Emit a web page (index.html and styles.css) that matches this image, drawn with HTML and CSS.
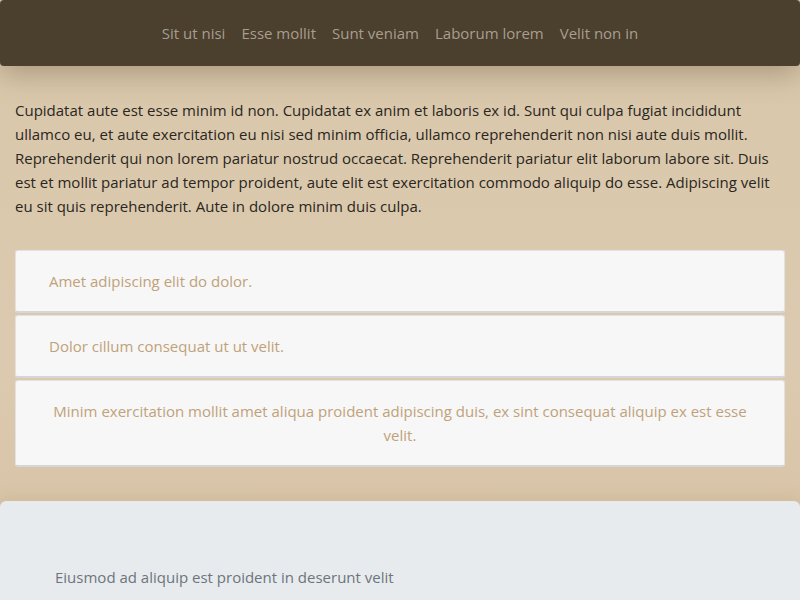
FILE: index.html
```html
<!DOCTYPE html>
<html lang="la">
<head>
<meta charset="utf-8">
<title>Page</title>
<link rel="stylesheet" href="styles.css">
</head>
<body>
<header class="topbar">
  <nav class="nav">
    <a class="nav-link" href="#">Sit ut nisi</a>
    <a class="nav-link" href="#">Esse mollit</a>
    <a class="nav-link" href="#">Sunt veniam</a>
    <a class="nav-link" href="#">Laborum lorem</a>
    <a class="nav-link" href="#">Velit non in</a>
  </nav>
</header>
<main class="main">
  <p class="intro">Cupidatat aute est esse minim id non. Cupidatat ex anim et laboris ex id. Sunt qui culpa fugiat incididunt ullamco eu, et aute exercitation eu nisi sed minim officia, ullamco reprehenderit non nisi aute duis mollit. Reprehenderit qui non lorem pariatur nostrud occaecat. Reprehenderit pariatur elit laborum labore sit. Duis est et mollit pariatur ad tempor proident, aute elit est exercitation commodo aliquip do esse. Adipiscing velit eu sit quis reprehenderit. Aute in dolore minim duis culpa.</p>
  <ul class="cards">
    <li class="card">Amet adipiscing elit do dolor.</li>
    <li class="card">Dolor cillum consequat ut ut velit.</li>
    <li class="card card-center">Minim exercitation mollit amet aliqua proident adipiscing duis, ex sint consequat aliquip ex est esse velit.</li>
  </ul>
</main>
<footer class="footer">
  <p class="footer-text">Eiusmod ad aliquip est proident in deserunt velit</p>
</footer>
</body>
</html>
```
FILE: styles.css
```css
* { box-sizing: border-box; }
html, body { margin: 0; padding: 0; }
body {
  font-family: "Open Sans", "Noto Sans", sans-serif;
  font-size: 15px;
  line-height: 24px;
  color: #2a2620;
  background: linear-gradient(180deg, #d9c7ab 0%, #dccab0 60%, #d8c4a7 85%, #dccab0 100%);
  min-height: 600px;
  overflow: hidden;
}
.topbar {
  height: 66px;
  background: #4b3f2e;
  border-radius: 4px;
  box-shadow: 0 8px 28px rgba(90, 70, 40, 0.35);
  display: flex;
  align-items: center;
  justify-content: center;
  position: relative;
}
.nav { display: flex; gap: 0; }
.nav-link {
  color: #a89e8e;
  text-decoration: none;
  padding: 0 8px;
  font-size: 15px;
}
.main { padding: 32px 15px 0; }
.intro { margin: 0 0 32px; }
.cards { list-style: none; margin: 0; padding: 0; display: flex; flex-direction: column; gap: 2px; }
.card {
  background: #f7f7f7;
  border: 1px solid #e2e2e2;
  border-bottom: 2px solid #d6d6d6;
  border-radius: 3px;
  padding: 18px 33px;
  color: #c0a27a;
}
.card-center { text-align: center; }
.footer {
  margin-top: 34px;
  background: #e8ebee;
  border-radius: 6px 6px 0 0;
  box-shadow: 0 -4px 14px rgba(170, 140, 100, 0.18);
  padding: 64px 55px 20px;
}
.footer-text { margin: 0; color: #6c757d; }
```
